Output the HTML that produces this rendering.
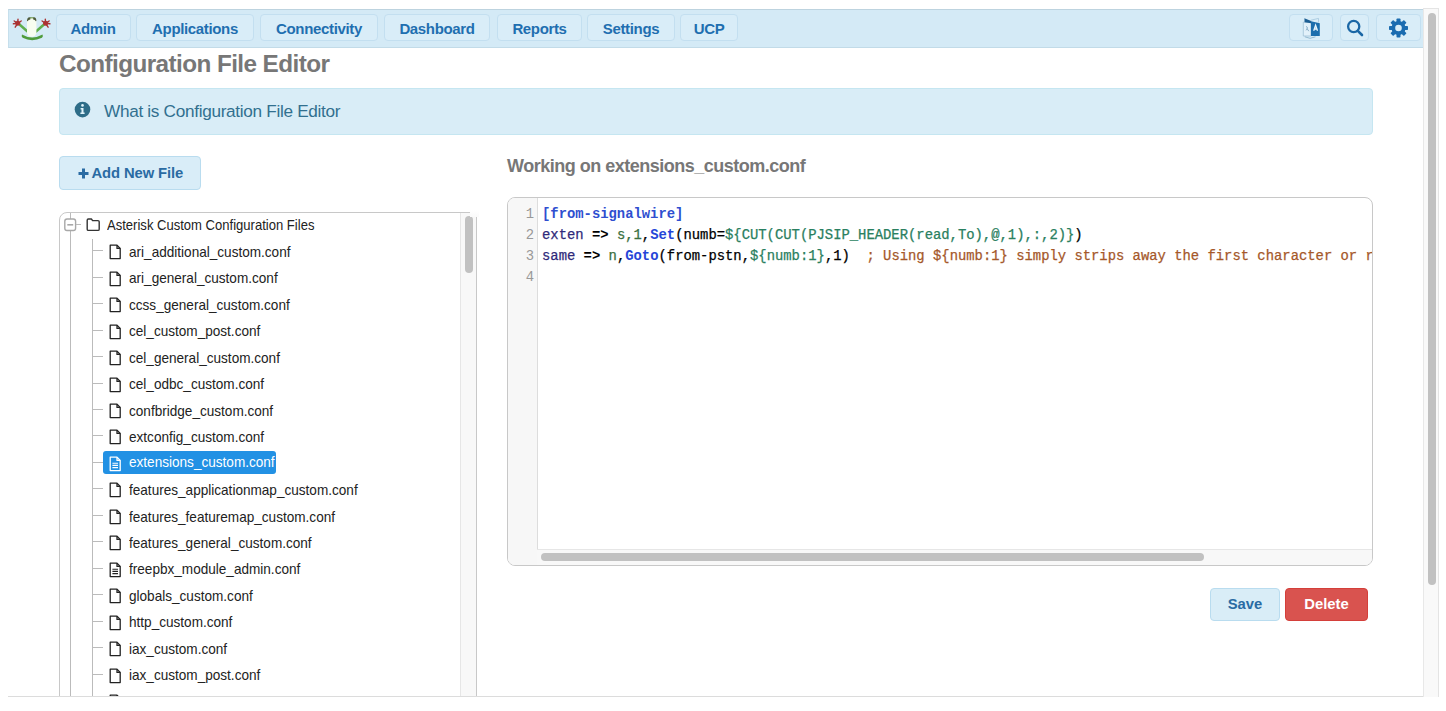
<!DOCTYPE html>
<html><head><meta charset="utf-8">
<style>
*{box-sizing:border-box;margin:0;padding:0}
html,body{width:1446px;height:711px;overflow:hidden;background:#fff;font-family:"Liberation Sans",sans-serif}
#nav{position:absolute;left:8px;top:9px;width:1415px;height:39px;background:#d4eaf6;border-top:1px solid #bdd3df;border-bottom:1px solid #c2dbe8;border-left:1px solid #c6dfec}
.nb{position:absolute;top:14px;height:27px;background:#d9edf8;border:1px solid #c3dff0;border-radius:4px;color:#1f6fb0;font-weight:bold;font-size:15px;letter-spacing:-0.35px;line-height:25px;padding-top:1px;text-align:center;white-space:nowrap}
h1{position:absolute;left:59px;top:48px;font-size:24.3px;letter-spacing:-0.58px;font-weight:bold;color:#777;line-height:32px;white-space:nowrap}
#info{position:absolute;left:59px;top:88px;width:1314px;height:47px;background:#d9edf7;border:1px solid #c5e6f1;border-radius:4px}
#info .t{position:absolute;left:44px;top:0;line-height:45px;font-size:17.2px;letter-spacing:-0.31px;color:#31708f;white-space:nowrap}
#addbtn{position:absolute;left:59px;top:156px;width:142px;height:34px;background:#d9edf8;border:1px solid #b9dcef;border-radius:4px;color:#2a6ba3;font-weight:bold;font-size:14.5px;line-height:32px;text-align:center;white-space:nowrap}
h3{position:absolute;left:507px;top:155px;font-size:18px;letter-spacing:-0.5px;font-weight:bold;color:#777;line-height:22px;white-space:nowrap}
#tree{position:absolute;left:59px;top:212px;width:418px;height:600px;border:1px solid #c8c8c8;border-radius:8px 0 8px 8px;overflow:hidden}
#tscroll{position:absolute;right:0;top:0;width:16px;height:100%;background:#f8f8f8;border-left:1px solid #e6e6e6}
#tthumb{position:absolute;left:4px;top:3px;width:8px;height:57px;border-radius:4px;background:#c1c1c1}
.vl{position:absolute;width:1px;background:#bbb}
.conn{position:absolute;left:92px;width:11px;height:1px;background:#bbb}
.fi{position:absolute;left:108px}
.fn{position:absolute;left:128.5px;font-size:15px;line-height:20px;color:#222;white-space:nowrap;transform:scaleX(0.905);transform-origin:0 0}
.fs{color:#fff}
.sel{position:absolute;left:103px;width:173px;height:23px;background:#2291e4;border-radius:3px}
#editor{position:absolute;left:507px;top:197px;width:866px;height:369px;border:1px solid #c8c8c8;border-radius:8px;overflow:hidden;background:#fff}
#gutter{position:absolute;left:0;top:0;width:30px;height:100%;background:#f7f7f7;border-right:1px solid #ddd}
#hscroll{position:absolute;left:29px;top:351px;width:840px;height:20px;background:#f8f8f8;border-top:1px solid #e6e6e6}
#hthumb{position:absolute;left:4px;top:3px;width:663px;height:8px;border-radius:4px;background:#c1c1c1}
.ln{position:absolute;left:510px;width:24px;text-align:right;font-family:"Liberation Mono",monospace;font-size:13.87px;color:#999;line-height:21.1px}
.code{position:absolute;left:542px;font-family:"Liberation Mono",monospace;font-size:13.87px;line-height:21.1px;white-space:pre;color:#000;width:830px;overflow:hidden;-webkit-text-stroke:0.25px currentColor}
.hd{color:#2f4fd0;font-weight:bold;-webkit-text-stroke:0}
.at{color:#2f2a7a}
.op{font-weight:bold;-webkit-text-stroke:0}
.nu{color:#3a7040}
.kw{color:#2545d8;font-weight:bold;-webkit-text-stroke:0}
.v3{color:#2a8060}
.cm{color:#a5582a}
.btn{position:absolute;top:588px;height:33px;border-radius:4px;font-weight:bold;font-size:14.8px;line-height:31px;text-align:center}
#cover{position:absolute;left:0;top:697px;width:1446px;height:14px;background:#fff}
#frame-bottom{position:absolute;left:8px;top:696px;width:1431px;height:1px;background:#dcdcdc}
#vscroll{position:absolute;left:1423px;top:8px;width:16px;height:689px;background:#f9f9f9;border-left:1px solid #e8e8e8;border-right:1px solid #e4e4e4;border-top:1px solid #e4e4e4}
#vthumb{position:absolute;left:4px;top:4px;width:8px;height:572px;border-radius:4px;background:#c1c1c1}
</style></head>
<body>
<svg width="0" height="0" style="position:absolute">
  <defs>
    <g id="doc" fill="none" stroke="currentColor" stroke-width="1.3" stroke-linejoin="round">
      <path d="M2.2 1.2H9L12.2 4.4V14.6H2.2Z"/>
      <path d="M9 1.2V4.4H12.2"/>
    </g>
    <g id="docl" fill="none" stroke="currentColor" stroke-width="1.3" stroke-linejoin="round">
      <path d="M2.2 1.2H9L12.2 4.4V14.6H2.2Z"/>
      <path d="M9 1.2V4.4H12.2"/>
      <path d="M4.4 7.2H10M4.4 9.4H10M4.4 11.6H10" stroke-width="1.1"/>
    </g>
  </defs>
</svg>
<div id="nav"></div>
<svg style="position:absolute;left:9px;top:13px" width="44" height="30" viewBox="0 0 44 30">
  <path d="M10.5 11.5 L18.5 18.5" stroke="#5fae4c" stroke-width="2.4" stroke-linecap="round"/>
  <path d="M35 11.5 L27 18.5" stroke="#5fae4c" stroke-width="2.4" stroke-linecap="round"/>
  <path d="M13 21.5 Q23 27.5 33.5 21.5 Q34.5 23.5 33 24.8 Q23 29.5 13.6 24.8 Q12 23.5 13 21.5Z" fill="#4f9c3c"/>
  <rect x="18" y="4.2" width="9.4" height="19.5" rx="4.2" fill="#f8fdf0"/>
  <path d="M18 8 Q18 4.2 20.5 4.2 L21.5 4.2 L21.3 6.5 Q19.5 6.5 18.6 8.2Z" fill="#4d5b3c"/>
  <path d="M27.4 8 Q27.4 4.2 25 4.2 L24 4.2 L24.2 6.5 Q26 6.5 26.8 8.2Z" fill="#4d5b3c"/>
  <path d="M21 4.2 H24.4 V5.4 H21Z" fill="#6e9a55"/>
  <g fill="#b53434">
    <circle cx="8.7" cy="10.3" r="2.5"/>
    <circle cx="36.6" cy="10.3" r="2.5"/>
  </g>
  <g stroke="#a83232" stroke-width="1.4" stroke-linecap="round">
    <path d="M8.7 10.3L5.2 8M8.7 10.3L4.4 10.8M8.7 10.3L6.2 14.2M8.7 10.3L9 6.2M8.7 10.3L12.2 8"/>
    <path d="M36.6 10.3L40.1 8M36.6 10.3L40.9 10.8M36.6 10.3L39.1 14.2M36.6 10.3L36.3 6.2M36.6 10.3L33.1 8"/>
  </g>
</svg>
<div class="nb" style="left:55.5px;width:75px">Admin</div>
<div class="nb" style="left:136px;width:118px">Applications</div>
<div class="nb" style="left:260px;width:118px">Connectivity</div>
<div class="nb" style="left:384px;width:106px">Dashboard</div>
<div class="nb" style="left:497px;width:85px">Reports</div>
<div class="nb" style="left:587px;width:88px">Settings</div>
<div class="nb" style="left:680px;width:58px">UCP</div>
<div class="nb" style="left:1289px;width:44px"></div>
<div class="nb" style="left:1340px;width:29px"></div>
<div class="nb" style="left:1376px;width:45px"></div>
<svg style="position:absolute;left:1301px;top:17px" width="20" height="23" viewBox="0 0 20 23">
  <path d="M10 3.2 L17.5 1.4 V5.5" stroke="#a9cbe0" stroke-width="0.9" fill="none"/>
  <path d="M2.3 5.2 H10 V19 H2.3Z" fill="#e2f1fa" stroke="#9fc0d6" stroke-width="0.8"/>
  <path d="M3.4 1.3 L10.2 4.1 V6.2 L3.6 5.2Z" fill="#1d5f94"/>
  <path d="M10 4.3 L18.8 6.2 V19 H10Z" fill="#1c6ead"/>
  <path d="M12.7 13.8 L14.6 8.2 L16.5 13.8 M13.3 12 H15.9" stroke="#e8f5fc" stroke-width="1.3" fill="none"/>
  <path d="M5 9.5 Q7 9.8 6.2 11.8 Q5.5 13 4.8 13.2 M6 11.5 L7.8 14.2" stroke="#7ea6c2" stroke-width="0.9" fill="none"/>
  <path d="M3.8 19.8 Q9 22.8 14.5 19.8" stroke="#8fb4cc" stroke-width="0.9" fill="none"/>
</svg>
<svg style="position:absolute;left:1345px;top:18px" width="20" height="20" viewBox="0 0 20 20">
  <circle cx="8.7" cy="8.5" r="5.6" fill="none" stroke="#1b67a6" stroke-width="2.3"/>
  <path d="M12.8 12.8 L17 17" stroke="#1b67a6" stroke-width="2.6" stroke-linecap="round"/>
</svg>
<svg style="position:absolute;left:1388px;top:18px" width="21" height="21" viewBox="0 0 21 21">
  <g transform="translate(10.5 10)" fill="#1b6cb0">
    <circle r="7"/>
    <rect x="-2" y="-9.5" width="4" height="19" rx="0.8"/>
    <rect x="-2" y="-9.5" width="4" height="19" rx="0.8" transform="rotate(45)"/>
    <rect x="-2" y="-9.5" width="4" height="19" rx="0.8" transform="rotate(90)"/>
    <rect x="-2" y="-9.5" width="4" height="19" rx="0.8" transform="rotate(135)"/>
    <circle r="3.3" fill="#d9edf8"/>
  </g>
</svg>

<h1>Configuration File Editor</h1>
<div id="info"><span class="t">What is Configuration File Editor</span></div>
<svg style="position:absolute;left:74px;top:101px" width="17" height="17" viewBox="0 0 17 17">
  <circle cx="8.5" cy="8.6" r="7.8" fill="#2e6d88"/>
  <circle cx="8.5" cy="4.4" r="1.3" fill="#e0f4fb"/>
  <path d="M6.6 7 H9.5 V11.6 H10.6 V13 H6.4 V11.6 H7.5 V8.4 H6.6Z" fill="#e0f4fb"/>
</svg>
<div id="addbtn"></div><svg style="position:absolute;left:77.5px;top:167.5px" width="11" height="11" viewBox="0 0 11 11"><path d="M5.5 0.5V10.5M0.5 5.5H10.5" stroke="#2a6ba3" stroke-width="3"/></svg><div style="position:absolute;left:91.5px;top:157px;line-height:32px;font-weight:bold;font-size:14.8px;letter-spacing:-0.1px;color:#2a6ba3;white-space:nowrap">Add New File</div>
<h3>Working on extensions_custom.conf</h3>

<div id="tree"><div id="tscroll"><div id="tthumb"></div></div></div>
<div style="position:absolute;left:470px;top:210px;width:9px;height:7px;background:linear-gradient(#fff,#fafafa)"></div>
<div class="vl" style="left:70px;top:213px;height:484px"></div>
<div class="vl" style="left:91.5px;top:238.5px;height:460px"></div>
<svg style="position:absolute;left:63px;top:217px" width="14" height="16" viewBox="0 0 14 16">
  <rect x="1.8" y="2" width="10.8" height="11.5" rx="2.2" fill="#fff" stroke="#a8a8a8" stroke-width="1.4"/>
  <path d="M4.3 7.8 H10.2" stroke="#a8a8a8" stroke-width="1.6"/>
</svg>
<div class="conn" style="left:76px;width:5px;top:224.3px"></div>
<svg style="position:absolute;left:85px;top:217px" width="16" height="15" viewBox="0 0 16 15">
  <path d="M2.2 3.2 Q2.2 2 3.4 2 H6.4 L7.6 3.6 H13 Q14.2 3.6 14.2 4.8 V12.2 Q14.2 13.4 13 13.4 H3.4 Q2.2 13.4 2.2 12.2Z" fill="none" stroke="#333" stroke-width="1.4" stroke-linejoin="round"/>
</svg>
<div class="fn" style="left:106.5px;top:214.7px;transform:scaleX(0.87)">Asterisk Custom Configuration Files</div>
<div class="conn" style="top:250.30px"></div>
<svg class="fi" style="top:244.30px" width="14" height="16" viewBox="0 0 14 16"><use href="#doc" style="color:#222"/></svg>
<div class="fn" style="top:242.00px">ari_additional_custom.conf</div>
<div class="conn" style="top:276.75px"></div>
<svg class="fi" style="top:270.75px" width="14" height="16" viewBox="0 0 14 16"><use href="#doc" style="color:#222"/></svg>
<div class="fn" style="top:268.45px">ari_general_custom.conf</div>
<div class="conn" style="top:303.20px"></div>
<svg class="fi" style="top:297.20px" width="14" height="16" viewBox="0 0 14 16"><use href="#doc" style="color:#222"/></svg>
<div class="fn" style="top:294.90px">ccss_general_custom.conf</div>
<div class="conn" style="top:329.65px"></div>
<svg class="fi" style="top:323.65px" width="14" height="16" viewBox="0 0 14 16"><use href="#doc" style="color:#222"/></svg>
<div class="fn" style="top:321.35px">cel_custom_post.conf</div>
<div class="conn" style="top:356.10px"></div>
<svg class="fi" style="top:350.10px" width="14" height="16" viewBox="0 0 14 16"><use href="#doc" style="color:#222"/></svg>
<div class="fn" style="top:347.80px">cel_general_custom.conf</div>
<div class="conn" style="top:382.55px"></div>
<svg class="fi" style="top:376.55px" width="14" height="16" viewBox="0 0 14 16"><use href="#doc" style="color:#222"/></svg>
<div class="fn" style="top:374.25px">cel_odbc_custom.conf</div>
<div class="conn" style="top:409.00px"></div>
<svg class="fi" style="top:403.00px" width="14" height="16" viewBox="0 0 14 16"><use href="#doc" style="color:#222"/></svg>
<div class="fn" style="top:400.70px">confbridge_custom.conf</div>
<div class="conn" style="top:435.45px"></div>
<svg class="fi" style="top:429.45px" width="14" height="16" viewBox="0 0 14 16"><use href="#doc" style="color:#222"/></svg>
<div class="fn" style="top:427.15px">extconfig_custom.conf</div>
<div class="conn" style="top:461.90px"></div>
<div class="sel" style="top:451.30px"></div>
<svg class="fi" style="top:455.90px" width="14" height="16" viewBox="0 0 14 16"><use href="#docl" style="color:#fff"/></svg>
<div class="fn fs" style="top:452.40px">extensions_custom.conf</div>
<div class="conn" style="top:488.35px"></div>
<svg class="fi" style="top:482.35px" width="14" height="16" viewBox="0 0 14 16"><use href="#doc" style="color:#222"/></svg>
<div class="fn" style="top:480.05px">features_applicationmap_custom.conf</div>
<div class="conn" style="top:514.80px"></div>
<svg class="fi" style="top:508.80px" width="14" height="16" viewBox="0 0 14 16"><use href="#doc" style="color:#222"/></svg>
<div class="fn" style="top:506.50px">features_featuremap_custom.conf</div>
<div class="conn" style="top:541.25px"></div>
<svg class="fi" style="top:535.25px" width="14" height="16" viewBox="0 0 14 16"><use href="#doc" style="color:#222"/></svg>
<div class="fn" style="top:532.95px">features_general_custom.conf</div>
<div class="conn" style="top:567.70px"></div>
<svg class="fi" style="top:561.70px" width="14" height="16" viewBox="0 0 14 16"><use href="#docl" style="color:#222"/></svg>
<div class="fn" style="top:559.40px">freepbx_module_admin.conf</div>
<div class="conn" style="top:594.15px"></div>
<svg class="fi" style="top:588.15px" width="14" height="16" viewBox="0 0 14 16"><use href="#doc" style="color:#222"/></svg>
<div class="fn" style="top:585.85px">globals_custom.conf</div>
<div class="conn" style="top:620.60px"></div>
<svg class="fi" style="top:614.60px" width="14" height="16" viewBox="0 0 14 16"><use href="#doc" style="color:#222"/></svg>
<div class="fn" style="top:612.30px">http_custom.conf</div>
<div class="conn" style="top:647.05px"></div>
<svg class="fi" style="top:641.05px" width="14" height="16" viewBox="0 0 14 16"><use href="#doc" style="color:#222"/></svg>
<div class="fn" style="top:638.75px">iax_custom.conf</div>
<div class="conn" style="top:673.50px"></div>
<svg class="fi" style="top:667.50px" width="14" height="16" viewBox="0 0 14 16"><use href="#doc" style="color:#222"/></svg>
<div class="fn" style="top:665.20px">iax_custom_post.conf</div>
<div class="conn" style="top:699.95px"></div>
<svg class="fi" style="top:693.95px" width="14" height="16" viewBox="0 0 14 16"><use href="#doc" style="color:#222"/></svg>
<div class="fn" style="top:691.65px">iax_general_custom.conf</div>

<div id="editor">
  <div id="gutter"></div>
  <div id="hscroll"><div id="hthumb"></div></div>
</div>
<div class="ln" style="top:203.5px">1</div>
<div class="ln" style="top:224.6px">2</div>
<div class="ln" style="top:245.7px">3</div>
<div class="ln" style="top:266.8px">4</div>
<div class="code" style="top:203.5px"><span class="hd">[from-signalwire]</span></div>
<div class="code" style="top:224.6px"><span class="at">exten</span> <span class="op">=&gt;</span> <span class="nu">s,1</span>,<span class="kw">Set</span>(numb=<span class="v3">${CUT(CUT(PJSIP_HEADER(read,To),@,1),:,2)}</span>)</div>
<div class="code" style="top:245.7px"><span class="at">same</span> <span class="op">=&gt;</span> <span class="nu">n</span>,<span class="kw">Goto</span>(from-pstn,<span class="v3">${numb:1}</span>,1)  <span class="cm">; Using ${numb:1} simply strips away the first character or r</span></div>

<div class="btn" style="left:1210px;width:70px;background:#d9edf7;border:1px solid #b9dcef;color:#2a6ba3">Save</div>
<div class="btn" style="left:1285px;width:83px;background:#d9534f;border:1px solid #d43f3a;color:#fff">Delete</div>

<div id="cover"></div>
<div id="frame-bottom"></div>
<div id="vscroll"><div id="vthumb"></div></div>
</body></html>
